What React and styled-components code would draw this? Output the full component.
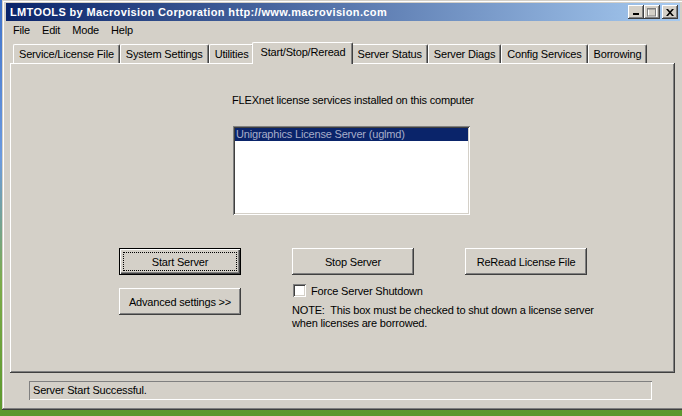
import React from 'react';
import styled, { createGlobalStyle, css } from 'styled-components';

// Win2k classic palette
const face = '#d4d0c8';
const shadow = '#808080';
const dark = '#404040';

const raised = css`
  box-shadow: inset -1px -1px ${dark}, inset 1px 1px #fff, inset -2px -2px ${shadow},
    inset 2px 2px ${face};
`;

const sunken = css`
  box-shadow: inset 1px 1px ${shadow}, inset -1px -1px #fff, inset 2px 2px ${dark},
    inset -2px -2px ${face};
`;

const GlobalStyle = createGlobalStyle`
  html, body {
    margin: 0;
    height: 100%;
    overflow: hidden;
  }
  body {
    background: linear-gradient(180deg, #3f72c9 0%, #6c9ade 38%, #7dab4a 68%, #5b972c 100%);
    font-family: 'Liberation Sans', Arial, sans-serif;
    font-size: 11px;
    letter-spacing: -0.18px;
    color: #000;
  }
`;

const Window = styled.div`
  box-sizing: border-box;
  width: 682px;
  height: 410px;
  margin-left: 2px;
  padding: 3px 4px 4px;
  background: ${face};
  box-shadow: inset -1px -1px ${dark}, inset 1px 1px ${face}, inset -2px -2px ${shadow},
    inset 2px 2px #fff;
  display: flex;
  flex-direction: column;
`;

const TitleBar = styled.div`
  height: 18px;
  display: flex;
  align-items: center;
  padding: 0 2px 0 4px;
  background: linear-gradient(90deg, #0a246a, #a6caf0);
`;

const Title = styled.span`
  color: #fff;
  font-weight: bold;
  font-size: 11px;
  letter-spacing: 0.36px;
  white-space: nowrap;
`;

const Caption = styled.div`
  margin-left: auto;
  display: flex;
`;

const CaptionButton = styled.button`
  width: 16px;
  height: 14px;
  padding: 0;
  border: 0;
  background: ${face};
  ${raised};
  display: flex;
  align-items: center;
  justify-content: center;
  margin-left: ${(p) => (p.$gap ? '2px' : '0')};
`;

const MenuBar = styled.div`
  height: 19px;
  display: flex;
  padding-left: 1px;
`;

const MenuItem = styled.span`
  padding: 0 6px;
  line-height: 19px;
`;

const TabControl = styled.div`
  margin: 0 5px 0 4px;
  display: flex;
  flex-direction: column;
`;

const TabStrip = styled.div`
  height: 23px;
  display: flex;
  align-items: flex-end;
  padding-left: 3px;
`;

const Tab = styled.div`
  position: relative;
  box-sizing: border-box;
  height: 19px;
  padding: 0 5px;
  line-height: 18px;
  white-space: nowrap;
  background: ${face};
  border-top: 1px solid #fff;
  border-left: 1px solid #fff;
  border-right: 1px solid ${dark};
  border-top-left-radius: 2px;
  border-top-right-radius: 2px;
  box-shadow: inset -1px 0 ${shadow};

  ${(p) =>
    p.$active &&
    css`
      z-index: 1;
      height: 22px;
      margin: 0 -2px -1px;
      padding: 0 7px 3px;
    `}
`;

const Panel = styled.div`
  box-sizing: border-box;
  height: 310px;
  padding-top: 31px;
  background: ${face};
  box-shadow: inset -1px -1px ${dark}, inset 1px 1px #fff, inset -2px -2px ${shadow};
`;

const Label = styled.div`
  margin-left: 222px;
  line-height: 13px;
`;

const ListBox = styled.div`
  box-sizing: border-box;
  margin: 19px 0 0 223px;
  width: 237px;
  height: 89px;
  padding: 2px;
  background: #fff;
  ${sunken};
`;

const ListItem = styled.div`
  height: 13px;
  line-height: 13px;
  padding-left: 1px;
  background: ${(p) => (p.$selected ? '#0a246a' : 'transparent')};
  color: ${(p) => (p.$selected ? '#a7adc9' : '#000')};
`;

const Controls = styled.div`
  margin: 33px 0 0 109px;
  display: grid;
  grid-template-columns: 122px 122px 122px;
  column-gap: 51px;
  row-gap: 9px;
  align-items: start;
`;

const Button = styled.button`
  position: relative;
  box-sizing: border-box;
  width: 122px;
  height: 27px;
  margin-top: ${(p) => p.$offset || 0}px;
  padding: 0;
  border: 0;
  background: ${face};
  font: inherit;
  letter-spacing: inherit;
  color: #000;
  ${raised};

  ${(p) =>
    p.$default &&
    css`
      box-shadow: inset 0 0 0 1px #000, inset 2px 2px #fff, inset -2px -2px ${dark},
        inset -3px -3px ${shadow};

      &::after {
        content: '';
        position: absolute;
        inset: 4px;
        border: 1px dotted #000;
      }
    `}
`;

const Options = styled.div`
  grid-column: 2 / 4;
  padding-left: 1px;
  white-space: nowrap;
`;

const CheckRow = styled.label`
  display: flex;
  align-items: center;
  gap: 5px;
  height: 13px;
`;

const CheckBox = styled.span`
  width: 13px;
  height: 13px;
  background: #fff;
  ${sunken};
`;

const Note = styled.p`
  margin: 7px 0 0 -1px;
  line-height: 13px;
`;

const StatusField = styled.div`
  box-sizing: border-box;
  width: 623px;
  height: 19px;
  margin: 8px 0 0 23px;
  padding-left: 4px;
  line-height: 19px;
  box-shadow: inset 1px 1px ${shadow}, inset -1px -1px #fff;
`;

const tabs = [
  'Service/License File',
  'System Settings',
  'Utilities',
  'Start/Stop/Reread',
  'Server Status',
  'Server Diags',
  'Config Services',
  'Borrowing',
];

export default function App() {
  return (
    <>
      <GlobalStyle />
      <Window>
        <TitleBar>
          <Title>LMTOOLS by Macrovision Corporation http://www.macrovision.com</Title>
          <Caption>
            <CaptionButton aria-label="Minimize">
              <svg width="8" height="8" viewBox="0 0 8 8">
                <rect x="1" y="5" width="6" height="2" fill="#000" />
              </svg>
            </CaptionButton>
            <CaptionButton aria-label="Maximize">
              <svg width="10" height="9" viewBox="0 0 10 9">
                <rect x="1.5" y="0.5" width="8" height="8" fill="none" stroke="#fff" />
                <rect x="0.5" y="0" width="8" height="1.5" fill={shadow} />
                <rect x="0.5" y="0.5" width="8" height="7.5" fill="none" stroke={shadow} />
              </svg>
            </CaptionButton>
            <CaptionButton $gap aria-label="Close">
              <svg width="8" height="7" viewBox="0 0 8 7">
                <path d="M0 0h2l2 2.2L6 0h2L5 3.5 8 7H6L4 4.8 2 7H0l3-3.5z" fill="#000" />
              </svg>
            </CaptionButton>
          </Caption>
        </TitleBar>

        <MenuBar>
          {['File', 'Edit', 'Mode', 'Help'].map((m) => (
            <MenuItem key={m}>{m}</MenuItem>
          ))}
        </MenuBar>

        <TabControl>
          <TabStrip>
            {tabs.map((t) => (
              <Tab key={t} $active={t === 'Start/Stop/Reread'}>
                {t}
              </Tab>
            ))}
          </TabStrip>
          <Panel>
            <Label>FLEXnet license services installed on this computer</Label>
            <ListBox>
              <ListItem $selected>Unigraphics License Server (uglmd)</ListItem>
            </ListBox>

            <Controls>
              <Button $default>Start Server</Button>
              <Button>Stop Server</Button>
              <Button>ReRead License File</Button>

              <Button $offset={4}>Advanced settings &gt;&gt;</Button>
              <Options>
                <CheckRow>
                  <CheckBox />
                  Force Server Shutdown
                </CheckRow>
                <Note>
                  NOTE:&nbsp; This box must be checked to shut down a license server
                  <br />
                  when licenses are borrowed.
                </Note>
              </Options>
            </Controls>
          </Panel>
        </TabControl>

        <StatusField>Server Start Successful.</StatusField>
      </Window>
    </>
  );
}
